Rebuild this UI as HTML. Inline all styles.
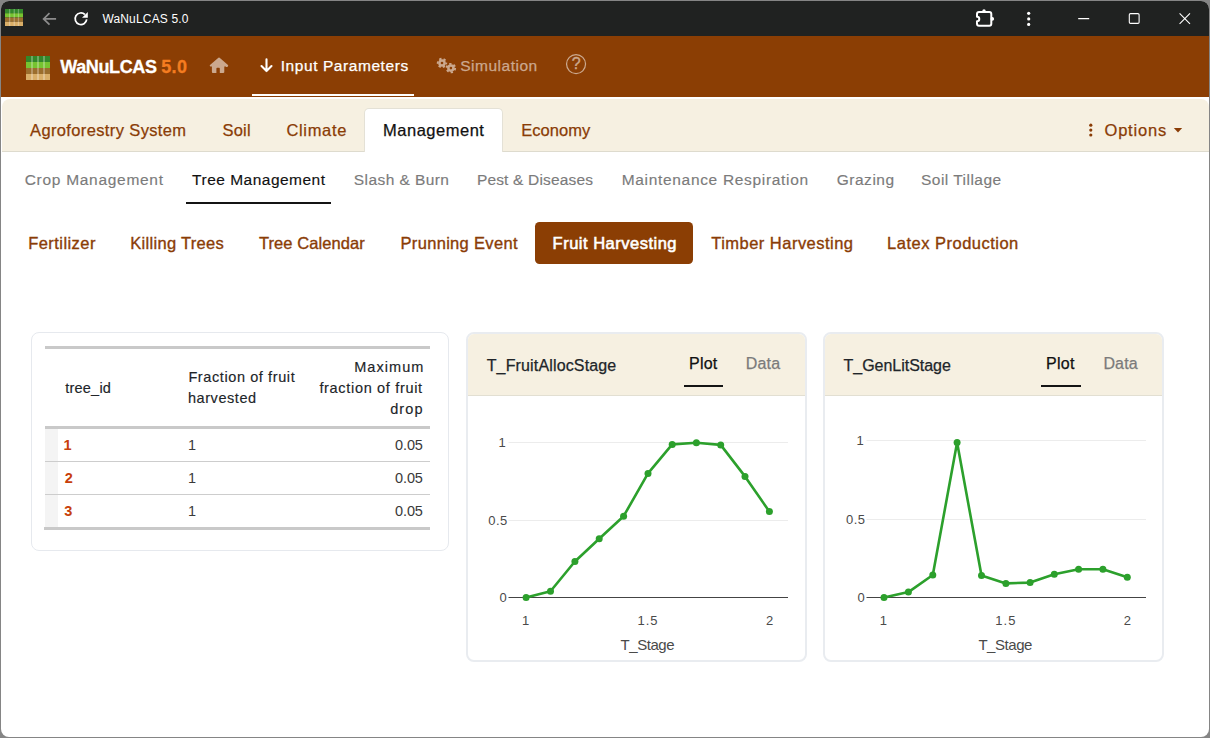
<!DOCTYPE html>
<html lang="en"><head><meta charset="utf-8"><title>WaNuLCAS 5.0</title>
<style>
html,body{margin:0;padding:0}
body{width:1210px;height:738px;overflow:hidden;background:#858585;font-family:"Liberation Sans",sans-serif;position:relative}
#win{position:absolute;left:1px;top:1px;width:1208px;height:736px;border-radius:8px;background:#fff;overflow:hidden}
#in{position:absolute;left:-1px;top:-1px;width:1210px;height:738px}
.a{position:absolute;display:block}
.t{position:absolute;white-space:pre;font-family:"Liberation Sans",sans-serif}
.tb{font-size:12px;line-height:12px}
.brand{font-size:18px;line-height:18px}
.ct{font-size:16px;line-height:16px}
.nv{font-size:15.5px;line-height:15.5px}
.st{font-size:15.5px;line-height:15.5px}
.mt,.nv,.ct{-webkit-text-stroke:0.25px currentColor}
.pl{-webkit-text-stroke:0.35px currentColor}
.st{-webkit-text-stroke:0.15px currentColor}
.brand{font-weight:700;-webkit-text-stroke:0.3px currentColor}
.th{-webkit-text-stroke:0.15px currentColor}
.mt,.pl{font-size:16.5px;line-height:16.5px}
.th,.td,.tdb{font-size:14.5px;line-height:14.5px}
.tdb{font-weight:700}
.tk{font-size:13px;line-height:13px}
.tk2{font-size:15px;line-height:15px}
.card{position:absolute;box-sizing:border-box;border:1px solid #e6e9ee;border-radius:8px;background:#fff}
.c2{border:2px solid #e9ecf0;box-shadow:none}
.chead{position:absolute;left:0;top:0;right:0;height:61px;background:#f6f0e1;border-bottom:1px solid #e2dfd2;border-radius:6px 6px 0 0}
</style></head><body>
<div id="win"><div id="in">
<!-- title bar -->
<div class="a" style="left:0;top:0;width:1210px;height:36px;background:#202221"></div>
<svg class="a" style="left:5px;top:9px" width="18" height="17" viewBox="0 0 18 17"><rect x="0" y="0.0" width="18" height="4.25" fill="#32872a"/><rect x="0" y="4.25" width="18" height="4.25" fill="#76c430"/><rect x="0" y="8.5" width="18" height="4.25" fill="#9b6e2d"/><rect x="0" y="12.75" width="18" height="4.25" fill="#d9ae68"/><rect x="4" y="0" width="1.3" height="17" fill="#fff" fill-opacity=".28"/><rect x="8.6" y="0" width="1.3" height="17" fill="#fff" fill-opacity=".28"/><rect x="12.8" y="0" width="1.3" height="17" fill="#fff" fill-opacity=".28"/></svg>
<svg class="a" style="left:40px;top:9px" width="20" height="20" viewBox="0 0 20 20" fill="none" stroke="#8c8c8c" stroke-width="1.7" stroke-linecap="butt" stroke-linejoin="miter"><path d="M16.1 9.9H3.6M9.5 4.1 3.6 9.9l5.9 5.8"/></svg>
<svg class="a" style="left:71px;top:9px" width="20" height="20" viewBox="0 0 20 20"><path d="M13.9 5.5A5.8 5.8 0 1 0 15.7 10.400" fill="none" stroke="#fff" stroke-width="1.75"/><path d="M16.8 2.900V8.700H11z" fill="#fff"/></svg>
<svg class="a" style="left:974px;top:7px" width="24" height="24" viewBox="0 0 24 24"><path d="M5 5H15.300a2 2 0 0 1 2 2V16.800a2 2 0 0 1-2 2H5a2 2 0 0 1-2-2V14.300a2.300 2.300 0 0 0 0-4.600V7a2 2 0 0 1 2-2z" fill="none" stroke="#fff" stroke-width="2" stroke-linejoin="round"/><circle cx="10" cy="3.900" r="1.700" fill="#fff"/><circle cx="18.300" cy="11.900" r="1.800" fill="#fff"/></svg>
<svg class="a" style="left:1020px;top:9px" width="18" height="20" viewBox="0 0 18 20" fill="#fff"><circle cx="8.7" cy="4.3" r="1.6"/><circle cx="8.7" cy="9.900" r="1.6"/><circle cx="8.7" cy="15.4" r="1.6"/></svg>
<svg class="a" style="left:1075px;top:9px" width="120" height="20" viewBox="0 0 120 20" fill="none" stroke="#fff" stroke-width="1.1"><path d="M3.2 9.6h11"/><rect x="54.3" y="4.6" width="9.8" height="9.8" rx="1.2"/><path d="M104.6 4.4l10.4 10.4M115 4.4l-10.4 10.4"/></svg>
<!-- navbar -->
<div class="a" style="left:0;top:36px;width:1210px;height:61px;background:#8b3e04"></div>
<svg class="a" style="left:26px;top:56px" width="24" height="24" viewBox="0 0 24 24"><rect x="0" y="0.0" width="24" height="6.0" fill="#32872a"/><rect x="0" y="6.0" width="24" height="6.0" fill="#76c430"/><rect x="0" y="12.0" width="24" height="6.0" fill="#9b6e2d"/><rect x="0" y="18.0" width="24" height="6.0" fill="#d9ae68"/><rect x="5" y="0" width="2" height="24" fill="#fff" fill-opacity=".28"/><rect x="11" y="0" width="2" height="24" fill="#fff" fill-opacity=".28"/><rect x="17" y="0" width="2" height="24" fill="#fff" fill-opacity=".28"/></svg>
<svg class="a" style="left:209px;top:57px" width="20" height="17" viewBox="0 0 20 17" fill="#cba88e"><path d="M10 .6a.9.9 0 0 0-.6.2L1 8a.8.8 0 0 0 .5 1.4h1.4v5.6c0 .5.4.9.9.9h3.6v-4.5c0-.4.3-.7.7-.7h2c.4 0 .7.3.7.7v4.5h3.6c.5 0 .9-.4.9-.9V9.400h1.400A.8.8 0 0 0 19 8L10.600.8a.9.9 0 0 0-.6-.2z"/></svg>
<svg class="a" style="left:259px;top:57px" width="16" height="17" viewBox="0 0 16 17" fill="none" stroke="#fff" stroke-width="2.1" stroke-linecap="round" stroke-linejoin="round"><path d="M7.5 2.4v11.6M2.5 9.1l5 5 5-5"/></svg>
<div class="a" style="left:252px;top:94px;width:162.3px;height:2px;background:#fff"></div>
<svg class="a" style="left:435px;top:56px" width="24" height="20" viewBox="0 0 24 20"><g fill="#cba88e" stroke="none"><circle cx="7" cy="7" r="3.8"/><circle cx="15.9" cy="12.1" r="3.8"/></g><g fill="none" stroke="#cba88e" stroke-width="1.9"><circle cx="7" cy="7" r="4.25" stroke-dasharray="2.3 2.15" stroke-dashoffset="1.1"/><circle cx="15.9" cy="12.1" r="4.25" stroke-dasharray="2.3 2.15" stroke-dashoffset="0"/></g><g fill="#8b3e04"><circle cx="7" cy="7" r="1.3"/><circle cx="15.9" cy="12.1" r="1.3"/></g></svg>
<svg class="a" style="left:564px;top:53px" width="24" height="24" viewBox="0 0 24 24"><circle cx="12.05" cy="11.1" r="9.500" fill="none" stroke="#cba88e" stroke-width="1.25"/><text x="12.100" y="16.200" text-anchor="middle" font-family="Liberation Sans, sans-serif" font-size="16" font-weight="400" fill="#cba88e" stroke="#cba88e" stroke-width=".35">?</text></svg>
<!-- main tabs header -->
<div class="a" style="left:2px;top:99px;width:1206.5px;height:52px;background:#f6f0e1;border-radius:8px 8px 0 0;border-bottom:1px solid #dedbce"></div>
<div class="a" style="left:364px;top:108px;width:139px;height:44px;box-sizing:border-box;background:#fff;border:1px solid #e4e1d6;border-bottom:none;border-radius:5px 5px 0 0"></div>
<svg class="a" style="left:1086px;top:122px" width="10" height="16" viewBox="0 0 10 16" fill="#8a3c06"><circle cx="4.8" cy="3.2" r="1.6"/><circle cx="4.8" cy="8.1" r="1.6"/><circle cx="4.8" cy="13" r="1.6"/></svg>
<svg class="a" style="left:1173px;top:127px" width="10" height="6" viewBox="0 0 10 6" fill="#8a3c06"><path d="M.8.9h8.4L5 5.4z"/></svg>
<!-- sub tabs -->
<div class="a" style="left:186.2px;top:202px;width:144.8px;height:2px;background:#141414"></div>
<!-- pills -->
<div class="a" style="left:534.8px;top:222px;width:158.3px;height:42px;background:#8b3e04;border-radius:4.5px"></div>
<!-- table card -->
<div class="card" style="left:31px;top:332px;width:418px;height:219px"></div>
<div class="a" style="left:45px;top:346px;width:385px;height:3px;background:#c9c9c9"></div>
<div class="a" style="left:45px;top:426px;width:385px;height:3px;background:#c9c9c9"></div>
<div class="a" style="left:45px;top:429px;width:13px;height:98px;background:#f4f4f4"></div>
<div class="a" style="left:45px;top:461px;width:385px;height:1px;background:#cdcdcd"></div>
<div class="a" style="left:45px;top:494px;width:385px;height:1px;background:#cdcdcd"></div>
<div class="a" style="left:44px;top:527px;width:386px;height:3px;background:#c9c9c9"></div>
<!-- plot cards -->
<div class="card c2" style="left:466px;top:332px;width:341px;height:330px"><div class="chead"></div></div>
<div class="card c2" style="left:823px;top:332px;width:341px;height:330px"><div class="chead"></div></div>
<div class="a" style="left:683.9px;top:385px;width:39.1px;height:2px;background:#141414"></div>
<div class="a" style="left:1041.1px;top:385px;width:39.9px;height:2px;background:#141414"></div>
<svg class="a" style="left:0;top:0" width="1210" height="738" viewBox="0 0 1210 738"><line x1="508.5" x2="788" y1="442.5" y2="442.5" stroke="#ececec" stroke-width="1"/><line x1="508.5" x2="788" y1="520.5" y2="520.5" stroke="#ececec" stroke-width="1"/><line x1="508.5" x2="788" y1="597.5" y2="597.5" stroke="#444" stroke-width="1"/><polyline points="526.1,597.6 550.5,591.3 574.9,561.5 599.2,538.7 623.6,516.2 648.0,473.4 672.2,444.4 696.4,442.8 720.7,444.9 745.0,476.4 769.4,511.6" fill="none" stroke="#2ca02c" stroke-width="2.6" stroke-linejoin="round"/><circle cx="526.1" cy="597.6" r="3.5" fill="#2ca02c"/><circle cx="550.5" cy="591.3" r="3.5" fill="#2ca02c"/><circle cx="574.9" cy="561.5" r="3.5" fill="#2ca02c"/><circle cx="599.2" cy="538.7" r="3.5" fill="#2ca02c"/><circle cx="623.6" cy="516.2" r="3.5" fill="#2ca02c"/><circle cx="648.0" cy="473.4" r="3.5" fill="#2ca02c"/><circle cx="672.2" cy="444.4" r="3.5" fill="#2ca02c"/><circle cx="696.4" cy="442.8" r="3.5" fill="#2ca02c"/><circle cx="720.7" cy="444.9" r="3.5" fill="#2ca02c"/><circle cx="745.0" cy="476.4" r="3.5" fill="#2ca02c"/><circle cx="769.4" cy="511.6" r="3.5" fill="#2ca02c"/><line x1="866.5" x2="1146" y1="440.5" y2="440.5" stroke="#ececec" stroke-width="1"/><line x1="866.5" x2="1146" y1="519.5" y2="519.5" stroke="#ececec" stroke-width="1"/><line x1="866.5" x2="1146" y1="597.5" y2="597.5" stroke="#444" stroke-width="1"/><polyline points="884.0,597.6 908.4,592.1 932.8,575.0 957.1,442.6 981.5,575.6 1005.9,583.4 1030.1,582.6 1054.3,574.2 1078.6,569.3 1102.9,569.3 1127.3,577.2" fill="none" stroke="#2ca02c" stroke-width="2.6" stroke-linejoin="round"/><circle cx="884.0" cy="597.6" r="3.5" fill="#2ca02c"/><circle cx="908.4" cy="592.1" r="3.5" fill="#2ca02c"/><circle cx="932.8" cy="575.0" r="3.5" fill="#2ca02c"/><circle cx="957.1" cy="442.6" r="3.5" fill="#2ca02c"/><circle cx="981.5" cy="575.6" r="3.5" fill="#2ca02c"/><circle cx="1005.9" cy="583.4" r="3.5" fill="#2ca02c"/><circle cx="1030.1" cy="582.6" r="3.5" fill="#2ca02c"/><circle cx="1054.3" cy="574.2" r="3.5" fill="#2ca02c"/><circle cx="1078.6" cy="569.3" r="3.5" fill="#2ca02c"/><circle cx="1102.9" cy="569.3" r="3.5" fill="#2ca02c"/><circle cx="1127.3" cy="577.2" r="3.5" fill="#2ca02c"/></svg>
<!-- text -->
<span class="t tb" style="left:102.4px;top:13px;letter-spacing:0.17px;color:#ffffff">WaNuLCAS 5.0</span>
<span class="t brand" style="left:60.2px;top:58px;letter-spacing:-0.36px;color:#ffffff;font-weight:700">WaNuLCAS</span>
<span class="t brand" style="left:161.2px;top:58px;letter-spacing:0.4px;color:#f47c20;font-weight:700">5.0</span>
<span class="t nv" style="left:280.7px;top:58px;letter-spacing:0.57px;color:#ffffff">Input Parameters</span>
<span class="t nv" style="left:460.2px;top:58px;letter-spacing:0.52px;color:#cba88e">Simulation</span>
<span class="t mt" style="left:30.0px;top:122px;letter-spacing:0.37px;color:#8a3c06">Agroforestry System</span>
<span class="t mt" style="left:222.4px;top:122px;letter-spacing:0.23px;color:#8a3c06">Soil</span>
<span class="t mt" style="left:286.4px;top:122px;letter-spacing:0.68px;color:#8a3c06">Climate</span>
<span class="t mt" style="left:521.3px;top:122px;letter-spacing:0.03px;color:#8a3c06">Economy</span>
<span class="t mt" style="left:1104.5px;top:122px;letter-spacing:0.8px;color:#8a3c06">Options</span>
<span class="t mt" style="left:383.0px;top:122px;letter-spacing:0.51px;color:#111">Management</span>
<span class="t st" style="left:24.7px;top:172px;letter-spacing:0.71px;color:#7b7b7b">Crop Management</span>
<span class="t st" style="left:353.8px;top:172px;letter-spacing:0.42px;color:#7b7b7b">Slash &amp; Burn</span>
<span class="t st" style="left:476.9px;top:172px;letter-spacing:0.17px;color:#7b7b7b">Pest &amp; Diseases</span>
<span class="t st" style="left:621.7px;top:172px;letter-spacing:0.68px;color:#7b7b7b">Maintenance Respiration</span>
<span class="t st" style="left:836.7px;top:172px;letter-spacing:0.53px;color:#7b7b7b">Grazing</span>
<span class="t st" style="left:921.0px;top:172px;letter-spacing:0.47px;color:#7b7b7b">Soil Tillage</span>
<span class="t st" style="left:192.1px;top:172px;letter-spacing:0.49px;color:#111">Tree Management</span>
<span class="t pl" style="left:28.2px;top:235px;letter-spacing:0.44px;color:#8a3c06">Fertilizer</span>
<span class="t pl" style="left:130.2px;top:235px;letter-spacing:0.31px;color:#8a3c06">Killing Trees</span>
<span class="t pl" style="left:259.0px;top:235px;letter-spacing:0.07px;color:#8a3c06">Tree Calendar</span>
<span class="t pl" style="left:400.5px;top:235px;letter-spacing:0.32px;color:#8a3c06">Prunning Event</span>
<span class="t pl" style="left:711.2px;top:235px;letter-spacing:0.48px;color:#8a3c06">Timber Harvesting</span>
<span class="t pl" style="left:887.1px;top:235px;letter-spacing:0.49px;color:#8a3c06">Latex Production</span>
<span class="t pl" style="left:552.6px;top:235px;letter-spacing:0.5px;color:#ffffff;-webkit-text-stroke:0.6px currentColor">Fruit Harvesting</span>
<span class="t th" style="left:65.2px;top:381px;letter-spacing:0.23px;color:#212529">tree_id</span>
<span class="t th" style="left:188.4px;top:370px;letter-spacing:0.6px;color:#212529">Fraction of fruit</span>
<span class="t th" style="left:187.9px;top:391px;letter-spacing:0.57px;color:#212529">harvested</span>
<span class="t th" style="left:354.2px;top:360px;letter-spacing:1.05px;color:#212529">Maximum</span>
<span class="t th" style="left:319.4px;top:381px;letter-spacing:0.68px;color:#212529">fraction of fruit</span>
<span class="t th" style="left:390.2px;top:402px;letter-spacing:1.1px;color:#212529">drop</span>
<span class="t tdb" style="left:63.6px;top:438px;letter-spacing:0px;color:#c7400a;font-weight:700">1</span>
<span class="t td" style="left:188.0px;top:438px;letter-spacing:0px;color:#3a3a3a">1</span>
<span class="t td" style="left:395.0px;top:438px;letter-spacing:-0.1px;color:#3a3a3a">0.05</span>
<span class="t tdb" style="left:64.8px;top:471px;letter-spacing:0px;color:#c7400a;font-weight:700">2</span>
<span class="t td" style="left:188.0px;top:471px;letter-spacing:0px;color:#3a3a3a">1</span>
<span class="t td" style="left:395.0px;top:471px;letter-spacing:-0.1px;color:#3a3a3a">0.05</span>
<span class="t tdb" style="left:64.3px;top:504px;letter-spacing:0px;color:#c7400a;font-weight:700">3</span>
<span class="t td" style="left:188.0px;top:504px;letter-spacing:0px;color:#3a3a3a">1</span>
<span class="t td" style="left:395.0px;top:504px;letter-spacing:-0.1px;color:#3a3a3a">0.05</span>
<span class="t ct" style="left:486.7px;top:358px;letter-spacing:0.15px;color:#212529">T_FruitAllocStage</span>
<span class="t ct" style="left:689.1px;top:356px;letter-spacing:0.2px;color:#111">Plot</span>
<span class="t ct" style="left:745.8px;top:356px;letter-spacing:0.17px;color:#7b7b7b">Data</span>
<span class="t ct" style="left:843.5px;top:358px;letter-spacing:-0.02px;color:#212529">T_GenLitStage</span>
<span class="t ct" style="left:1046.0px;top:356px;letter-spacing:0.27px;color:#111">Plot</span>
<span class="t ct" style="left:1103.4px;top:356px;letter-spacing:0.17px;color:#7b7b7b">Data</span>
<span class="t tk" style="left:498.6px;top:436px;letter-spacing:0px;color:#4a4a4a">1</span>
<span class="t tk" style="left:488.3px;top:514px;letter-spacing:0.4px;color:#4a4a4a">0.5</span>
<span class="t tk" style="left:499.6px;top:591px;letter-spacing:0px;color:#4a4a4a">0</span>
<span class="t tk" style="left:522.0px;top:614px;letter-spacing:0px;color:#4a4a4a">1</span>
<span class="t tk" style="left:637.4px;top:614px;letter-spacing:1.05px;color:#4a4a4a">1.5</span>
<span class="t tk" style="left:766.0px;top:614px;letter-spacing:0px;color:#4a4a4a">2</span>
<span class="t tk2" style="left:620.6px;top:637px;letter-spacing:-0.45px;color:#4a4a4a">T_Stage</span>
<span class="t tk" style="left:856.4px;top:434px;letter-spacing:0px;color:#4a4a4a">1</span>
<span class="t tk" style="left:846.1px;top:513px;letter-spacing:0.4px;color:#4a4a4a">0.5</span>
<span class="t tk" style="left:857.4px;top:591px;letter-spacing:0px;color:#4a4a4a">0</span>
<span class="t tk" style="left:879.8px;top:614px;letter-spacing:0px;color:#4a4a4a">1</span>
<span class="t tk" style="left:995.2px;top:614px;letter-spacing:1.05px;color:#4a4a4a">1.5</span>
<span class="t tk" style="left:1123.8px;top:614px;letter-spacing:0px;color:#4a4a4a">2</span>
<span class="t tk2" style="left:978.4px;top:637px;letter-spacing:-0.45px;color:#4a4a4a">T_Stage</span>
</div></div>
</body></html>
